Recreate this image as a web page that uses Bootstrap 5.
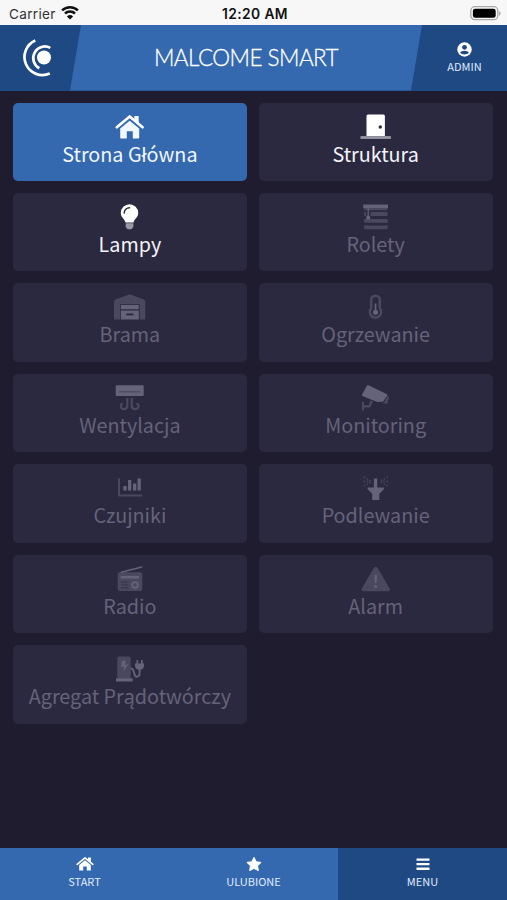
<!DOCTYPE html>
<html lang="pl">
<head>
<meta charset="utf-8">
<meta name="viewport" content="width=device-width, initial-scale=1">
<title>Malcome Smart</title>
<link href="https://cdn.jsdelivr.net/npm/bootstrap@5.3.0/dist/css/bootstrap.min.css" rel="stylesheet">
<style>
body{background:#1e1c2e;color:#f4f6ff;font-family:"Noto Sans CJK SC","Noto Sans",sans-serif;height:900px;overflow:hidden}
svg{display:block;flex:none}
.status-bar{height:25px;background:#f7f7f7;color:#111;font:13.6px/26px Inter,"Liberation Sans",sans-serif;padding:1px 6px 0 9px}
.status-bar .carrier{color:#333;letter-spacing:.3px}
.status-bar .clock{font-weight:600;font-size:13.8px;letter-spacing:.4px}
.app-header{height:65.5px;background:#1f4983}
.brand-side{width:70px;padding-left:21px}
.app-title{width:352px;background:#3468af;clip-path:polygon(11px 0,100% 0,341px 100%,0 100%);font:300 22.5px/1 Lato,sans-serif;color:#fff;-webkit-text-stroke:.3px #fff}
.app-title span{letter-spacing:-.55px;white-space:nowrap;padding-top:1px}
.user-side{padding:17px 0 0;font-size:11px;line-height:14px;color:#dfeaff}
.user-side svg{margin-bottom:2px}
.tiles{padding:12px 14.5px 0 13px;display:grid;grid-template-columns:1fr 1fr;column-gap:12px;row-gap:12px}
.tile{height:78.45px;border-radius:5px;background:#2b293f;color:#f4f4fb;padding-top:8px;font-size:19.75px;line-height:26px;white-space:nowrap}
.tile.current{background:#3468af;color:#f1f7ff}
.tile.off{color:#656379}
.tile svg{fill:currentColor}
.tile svg .dim{opacity:.55}
.tile svg .cut{fill:#2b293f}
.tile svg .ln{fill:none;stroke:currentColor}
.tabs{height:52.3px;background:#3468af;font-size:11px;line-height:14px;color:#e1ecff}
.tabs a{color:inherit;text-decoration:none;padding-top:9px}
.tabs a.on{background:#1f4983}
.tabs svg,.user-side svg{fill:#fff}
.tabs svg{margin-bottom:3px}
</style>
<script src="https://cdn.jsdelivr.net/npm/bootstrap@5.3.0/dist/js/bootstrap.bundle.min.js"></script>
</head>
<body class="d-flex flex-column">
<div class="status-bar row g-0 flex-nowrap">
  <div class="col carrier d-flex"><span>Carrier</span>
    <svg class="ms-1" width="20" height="24" viewBox="0 0 20 24" fill="none" stroke="#111" stroke-width="2.5"><path d="M2.1 9.400a11.300 11.300 0 0 1 15.800 0M5 12.500a7.200 7.200 0 0 1 10 0"/><path d="M10 18.600 6.900 15.400a4.500 4.500 0 0 1 6.200 0z" fill="#111" stroke="none"/></svg>
  </div>
  <div class="col-auto clock">12:20 AM</div>
  <div class="col d-flex justify-content-end">
    <svg width="31" height="24" viewBox="0 0 31 24"><rect x=".8" y="5.700" width="27" height="13" rx="4" fill="#f7f7f7" stroke="#aaa" stroke-width="1.300"/><rect x="2.900" y="7.700" width="22.800" height="9" rx="2.300" fill="#000"/><path d="M29 10c2 .8 2 4 0 4.800z" fill="#aaa"/></svg>
  </div>
</div>
<header class="app-header d-flex">
  <div class="brand-side d-flex align-items-center">
    <svg width="32" height="40" viewBox="0 0 32 40" fill="none" stroke="#fff" stroke-width="2.700"><path d="M14.300 2.500A18 18 0 0 0 28.800 35.600"/><path d="M29.300 9.900A11.500 11.500 0 1 0 18.300 30.200"/><circle cx="23" cy="19.500" r="7" fill="#fff" stroke="none"/></svg>
  </div>
  <div class="app-title d-flex align-items-center justify-content-center"><span>MALCOME SMART</span></div>
  <div class="user-side flex-fill d-flex flex-column align-items-center">
    <svg width="15" height="15" viewBox="0 0 15 15"><circle cx="7.500" cy="7.500" r="7.200"/><circle cx="7.500" cy="5.300" r="2.400" fill="#1f4983"/><path d="M3.200 10.800c.7-2.800 7.900-2.800 8.600 0-2 2.300-6.600 2.300-8.600 0z" fill="#1f4983"/></svg>
    <span>ADMIN</span>
  </div>
</header>
<main class="flex-grow-1">
  <div class="tiles">
    <div class="tile current d-flex flex-column align-items-center">
      <svg width="40" height="30" viewBox="0 0 40 30"><path d="M24.300 5h4.400v8l-4.400-3.600z"/><path d="M6.800 16.200 19.700 5.500l12.900 10.700" fill="none" stroke="#fff" stroke-width="2.700" stroke-linecap="round" stroke-linejoin="round"/><path d="M10.200 17.500 19.700 9.700l9.500 7.800v9.200a.8.800 0 0 1-.8.800h-5.600v-7.300h-6v7.300H11a.8.800 0 0 1-.8-.8z"/></svg>
      <span>Strona Główna</span></div>
    <div class="tile d-flex flex-column align-items-center">
      <svg width="40" height="30" viewBox="0 0 40 30"><path fill="#fff" d="M10.500 5a1.600 1.600 0 0 1 1.600-1.600h15.200A1.600 1.600 0 0 1 28.900 5v20.100H10.500z"/><path d="M4.500 25.100h30.400v2.800H4.500z" class="dim"/><circle class="cut" cx="24.300" cy="16" r="1.700"/></svg>
      <span>Struktura</span></div>
    <div class="tile d-flex flex-column align-items-center">
      <svg width="40" height="30" viewBox="0 0 40 30"><path fill="#fff" d="M19.500 3.300a8.700 8.700 0 0 0-8.700 8.700c0 4.600 3.800 5.700 4.700 9.600h8c.9-3.900 4.700-5 4.700-9.600a8.700 8.700 0 0 0-8.700-8.700z"/><path class="dim" d="M15.700 22.200h7.700V26l-2 2.200h-3.700l-2-2.200z"/><path d="M14.200 12a5.300 5.300 0 0 1 5.300-5.200" fill="none" stroke="#2b293f" stroke-width="1.500" stroke-linecap="round"/></svg>
      <span>Lampy</span></div>
    <div class="tile off d-flex flex-column align-items-center">
      <svg width="40" height="30" viewBox="0 0 40 30"><path d="M7.200 3.500H32v3.800H7.200zM11.600 7.300h1.200v7.300a2.100 2.100 0 1 1-1.200 0z"/><path class="dim" d="M8.200 7.300H31v2H8.200zM14.500 11H31.500v4H14.500zM8.200 18h23.500v3.800H8.200zM8.200 24.500h23.500v3.800H8.200zM8.200 11H10v4H8.200z"/></svg>
      <span>Rolety</span></div>
    <div class="tile off d-flex flex-column align-items-center">
      <svg width="40" height="30" viewBox="0 0 40 30"><path class="dim" d="M4 28.500V11q0-1.700 1.500-2.400L19.700 3.300l14.100 5.300Q35.300 9.300 35.300 11v17.500h-5.500V13.300H10v15.200z"/><path d="M10.800 14h18v4.300h-18zM10.800 19.600h18v8.900h-18z"/><path class="cut" d="M16.200 22.500h7.300v1.800h-7.300z"/></svg>
      <span>Brama</span></div>
    <div class="tile off d-flex flex-column align-items-center">
      <svg width="40" height="30" viewBox="0 0 40 30"><path class="dim ln" stroke-width="2.600" d="M15.200 17.400V9a4.300 4.300 0 0 1 8.600 0v8.400a5.600 5.600 0 1 1-8.600 0z"/><path d="M18.700 12.500h1.700v6.200a2.700 2.700 0 1 1-1.700 0z"/></svg>
      <span>Ogrzewanie</span></div>
    <div class="tile off d-flex flex-column align-items-center">
      <svg width="40" height="30" viewBox="0 0 40 30"><rect x="5.700" y="3.300" width="28" height="10.700" rx="1.200"/><path d="M9 9.800h21.500" stroke="#2b293f" stroke-opacity=".45" stroke-width="1.200"/><path class="dim ln" stroke-width="2.200" d="M17.300 16v7.500c0 4.700-6.500 4.900-6.500.3 0-1.200.8-2 2.200-2M21.700 16v7.500c0 4.700 6.800 4.900 6.800.3 0-1.200-.8-2-2.200-2"/></svg>
      <span>Wentylacja</span></div>
    <div class="tile off d-flex flex-column align-items-center">
      <svg width="40" height="30" viewBox="0 0 40 30"><path d="M11 3.500q.6-.7 1.500-.2l18.500 9q.8.500.3 1.300L27.500 19q-.4.600-1.200.7l-4.500.3q-.6 0-1.200-.3L6.300 14q-.8-.4-.3-1.200z"/><path class="dim" d="M31.500 14l1.500 1.500-1.700 6.200-5-.4 2-1.300zM5.900 20H8v3.200h4.500l2.300-4.800 2.200 1-2.600 5.500q-.4.700-1.200.7H8v2.700H5.900z"/></svg>
      <span>Monitoring</span></div>
    <div class="tile off d-flex flex-column align-items-center">
      <svg width="40" height="30" viewBox="0 0 40 30"><path class="dim" d="M8 6.600h2v16h22v2H9q-1 0-1-1z"/><path d="M13.300 13.900h3.400v4.700h-3.400zM18 7.900h3.300v10.700H18zM23 11.600h3.300v7H23zM27.600 6.600h3.200v12h-3.200z"/></svg>
      <span>Czujniki</span></div>
    <div class="tile off d-flex flex-column align-items-center">
      <svg width="40" height="30" viewBox="0 0 40 30"><path d="M17.900 6.600h3.300v9h6.700v1.600l-4.600 4.600v6.100h-7.100v-6.100l-4.600-4.600v-1.600h6.300z"/><path class="dim ln" stroke-width="1.700" stroke-linecap="round" stroke-dasharray="0 3.200" d="M8.300 5.200l7.500 4.300M8.300 13.500l7.500-4M8.300 9.400h4M31.200 5.200l-7.500 4.300M31.200 13.500l-7.500-4M31.200 9.400h-4"/></svg>
      <span>Podlewanie</span></div>
    <div class="tile off d-flex flex-column align-items-center">
      <svg width="40" height="30" viewBox="0 0 40 30"><path class="ln" stroke-width="1.600" stroke-linecap="round" d="M11.500 9.300 31.600 4"/><rect class="dim" x="7.700" y="9.300" width="24.600" height="18.700" rx="2.200"/><path d="M10.700 12.900H29v2.600H10.700z"/><circle class="ln" cx="25" cy="21.900" r="2.800" stroke-width="1.900"/><path fill="none" stroke="#2b293f" stroke-width="1.200" d="M11 19.200h7.500M11 22h7.500M11 24.800h7.500" stroke-opacity=".6"/></svg>
      <span>Radio</span></div>
    <div class="tile off d-flex flex-column align-items-center">
      <svg width="40" height="30" viewBox="0 0 40 30"><path class="dim" d="M17.800 5q1.900-2.400 3.800 0l11.900 20.200q1.200 2.800-1.800 3H7.700q-3-.2-1.800-3z"/><path d="M18.500 12h2.400l-.4 8h-1.600z"/><circle cx="19.700" cy="23.500" r="1.600"/></svg>
      <span>Alarm</span></div>
    <div class="tile off d-flex flex-column align-items-center">
      <svg width="40" height="30" viewBox="0 0 40 30"><path class="dim" d="M7.300 5.400q0-2 2-2h9.400q2 0 2 2V25H7.300z"/><path d="M6 25.300h16.700v3.100H6zM12 7.700h3.800l-1 3.700h3.200l-4.700 7.300 1-5h-3.300zM25 10.500h9v2q0 3.300-3 4.200h-3q-3-1-3-4.200zM26.500 7h1.700v3.500h-1.700zM31 7h1.700v3.500H31z"/><path class="ln" stroke-width="1.900" d="M20.700 15.500c4.600 0 2.300 8.200 6 8.300 3.400 0 2.900-3.500 2.900-7.500"/></svg>
      <span>Agregat Prądotwórczy</span></div>
  </div>
</main>
<nav class="tabs row g-0 text-center">
  <a class="col d-flex flex-column align-items-center" href="#"><svg width="18" height="14" viewBox="0 0 18 14"><path d="M12 .6h2.900V5.500L12 3z"/><path d="M1.200 7.300 9 .9l7.800 6.400" fill="none" stroke="#fff" stroke-width="1.700" stroke-linecap="round" stroke-linejoin="round"/><path d="M3.200 8 9 3.300 14.800 8v5.400h-4V9.500H7.200v3.900h-4z"/></svg><span>START</span></a>
  <a class="col d-flex flex-column align-items-center" href="#"><svg width="18" height="14" viewBox="0 0 18 14"><path d="m9 .3 2.200 4.400 4.900.7-3.500 3.400.8 4.900L9 11.400l-4.400 2.300.8-4.900-3.500-3.400 4.900-.7z" stroke="#fff" stroke-width=".9" stroke-linejoin="round"/></svg><span>ULUBIONE</span></a>
  <a class="col on d-flex flex-column align-items-center" href="#"><svg width="14" height="14" viewBox="0 0 14 14"><path d="M.5 1.400h13v2.300H.5zM.5 6h13v2.300H.5zM.5 10.600h13v2.300H.5z"/></svg><span>MENU</span></a>
</nav>
</body>
</html>
